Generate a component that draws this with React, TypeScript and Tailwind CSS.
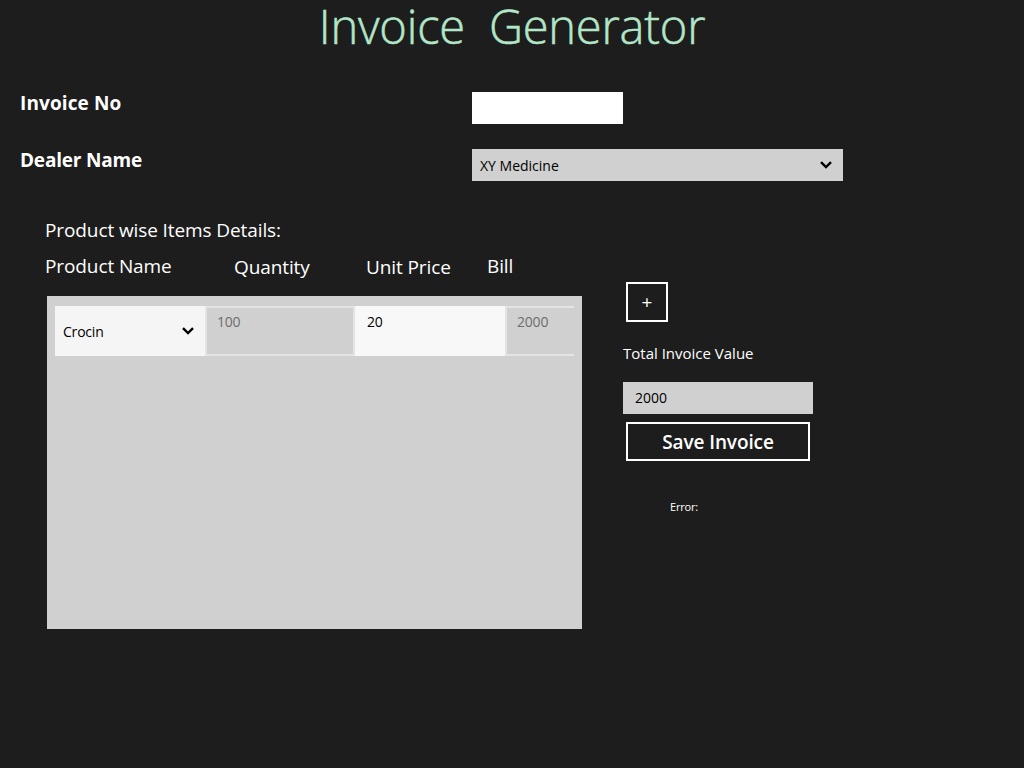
import React from 'react';

const font = "font-['Open_Sans','Noto_Sans',sans-serif]";

const Chevron: React.FC = () => (
  <svg width="12" height="8" viewBox="0 0 12 8" className="shrink-0">
    <path d="M1 1.2 6 6 11 1.2" fill="none" stroke="#000" strokeWidth="2.4" />
  </svg>
);

export default function App() {
  return (
    <div className={`${font} w-[1024px] h-[768px] overflow-hidden bg-[#1d1d1d] text-white`}>
      {/* Title */}
      <h1 className="h-[52px] text-center text-[47px] leading-[52px] font-light tracking-[-0.2px] [-webkit-text-stroke:0.5px_#b3e6c8] text-[#b3e6c8] whitespace-pre">
        Invoice  Generator
      </h1>

      {/* Header fields */}
      <div className="mt-[40px] flex h-[32px] pl-[20px]">
        <div className="w-[452px] -mt-[1px] text-[19px] leading-[24px] font-bold tracking-[0.1px]">Invoice No</div>
        <div className="w-[151px] h-[32px] bg-white"></div>
      </div>
      <div className="mt-[25px] flex h-[32px] pl-[20px]">
        <div className="w-[452px] -mt-[1px] text-[19px] leading-[24px] font-bold tracking-[-0.2px]">Dealer Name</div>
        <div className="w-[371px] h-[32px] bg-[#d0d0d0] flex items-center justify-between pl-[8px] pr-[11px] text-black text-[14px]">
          <span>XY Medicine</span>
          <Chevron />
        </div>
      </div>

      <div className="mt-[26px] flex">
        {/* Items */}
        <div className="w-[623px] pl-[45px]">
          <div className="h-[46px] text-[19px] leading-[46px] tracking-[-0.1px]">Product wise Items Details:</div>
          <div className="flex h-[28px] -mt-[1px] text-[19px] leading-[28px] tracking-[-0.1px]">
            <span className="w-[189px]">Product Name</span>
            <span className="w-[132px] mt-[1px]">Quantity</span>
            <span className="w-[121px] mt-[1px]">Unit Price</span>
            <span>Bill</span>
          </div>
          <div className="mt-[16px] ml-[2px] w-[535px] h-[333px] bg-[#d0d0d0] pt-[10px] pl-[8px]">
            <div className="flex w-[519px] h-[50px] text-[14px] tracking-[-0.2px] overflow-hidden">
              <div className="w-[150px] bg-[#f5f5f5] text-black flex items-center justify-between pl-[8px] pr-[11px]">
                <span>Crocin</span>
                <Chevron />
              </div>
              <div className="w-[150px] bg-[#d0d0d0] border-2 border-[#e4e4e4] pl-[10px] pt-[1px] text-[#6d6d6d] leading-[26px]">100</div>
              <div className="w-[150px] bg-[#f8f8f8] pl-[12px] pt-[3px] text-black leading-[26px]">20</div>
              <div className="w-[69px] bg-[#d0d0d0] border-y-2 border-l-2 border-[#e4e4e4] pl-[10px] pt-[1px] text-[#6d6d6d] leading-[26px]">2000</div>
            </div>
          </div>
        </div>

        {/* Totals */}
        <div className="w-[200px] pt-[75px]">
          <button className="ml-[3px] w-[42px] h-[40px] border-2 border-white flex items-center justify-center text-[19px]">+</button>
          <div className="mt-[20px] h-[22px] text-[15px] leading-[22px]">Total Invoice Value</div>
          <div className="mt-[18px] w-[190px] h-[32px] bg-[#d0d0d0] pl-[12px] text-black text-[14px] leading-[32px]">2000</div>
          <button className="mt-[8px] ml-[3px] w-[184px] h-[39px] border-2 border-white pt-[2px] text-[19px] font-semibold tracking-[-0.1px]">Save Invoice</button>
          <div className="mt-[38px] ml-[47px] text-[11px] leading-[16px] tracking-[-0.2px]">Error:</div>
        </div>
      </div>
    </div>
  );
}
